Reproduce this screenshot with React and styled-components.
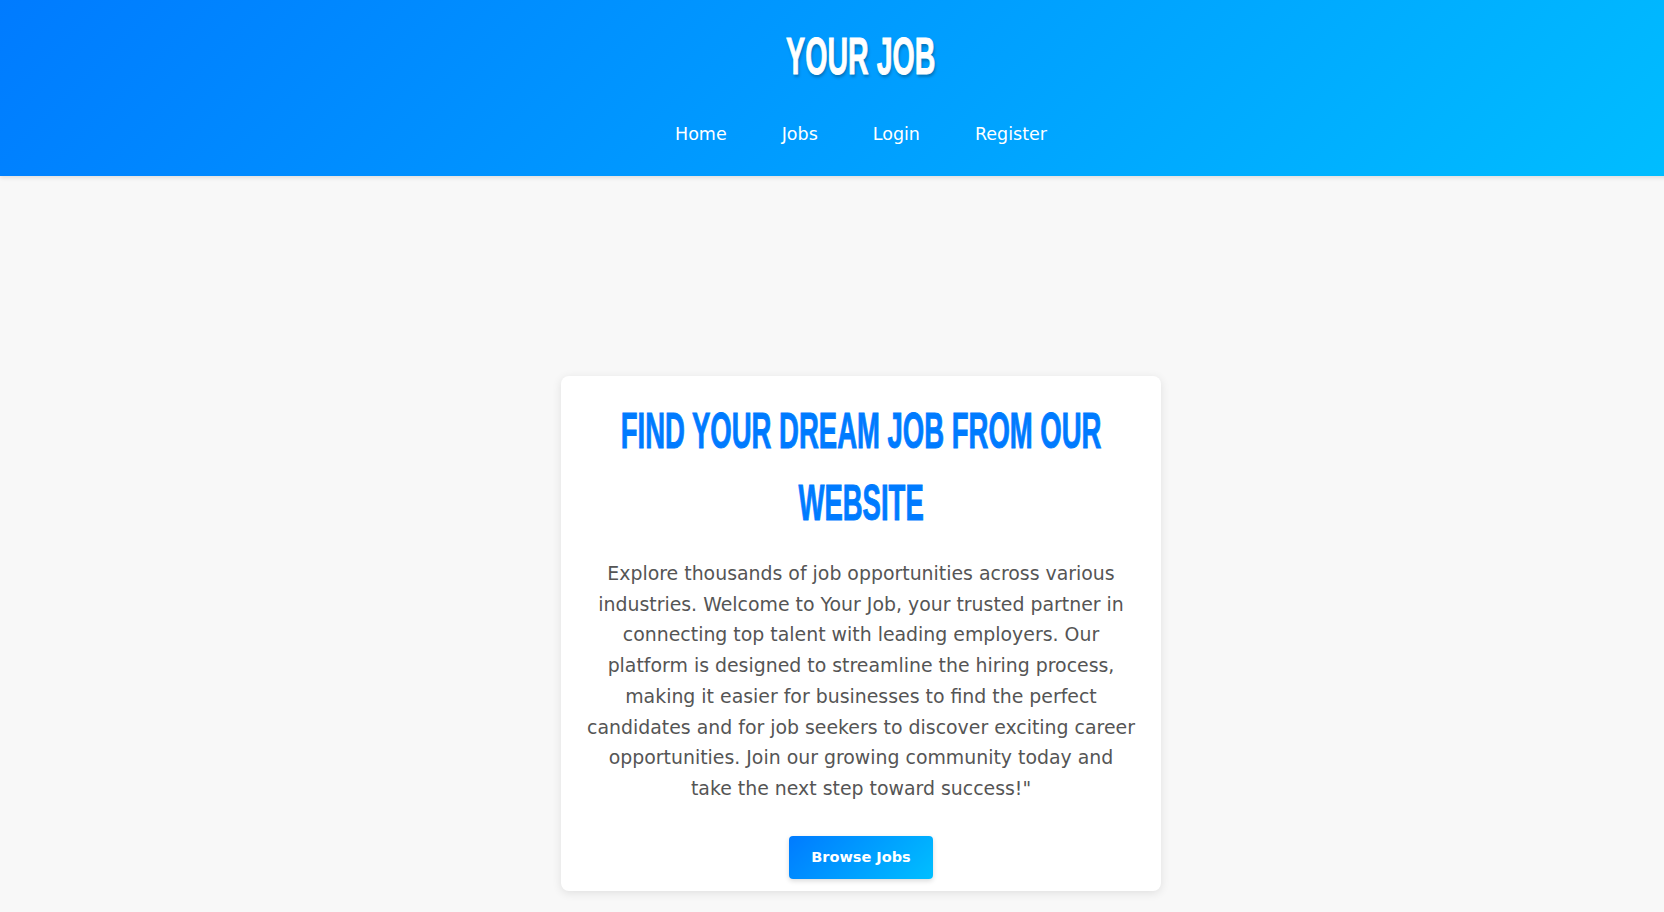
import styled, { createGlobalStyle } from "styled-components";

const GlobalStyle = createGlobalStyle`
  * {
    box-sizing: border-box;
  }
  body {
    margin: 0;
    background-color: #f8f8f8;
    font-family: "DejaVu Sans", "Liberation Sans", sans-serif;
    overflow-x: hidden;
  }
`;

// the display face is a squeezed bold grotesque
const SQUEEZE = 0.55;

function App() {
  return (
    <>
      <GlobalStyle />
      <Page>
        <Header>
          <Logo>Your Job</Logo>
          <Nav>
            {["Home", "Jobs", "Login", "Register"].map((item) => (
              <NavLink key={item} href="#">
                {item}
              </NavLink>
            ))}
          </Nav>
        </Header>

        <Main>
          <Card>
            <CardTitle>Find your dream job from our website</CardTitle>
            <CardText>
              Explore thousands of job opportunities across various industries.
              Welcome to Your Job, your trusted partner in connecting top talent
              with leading employers. Our platform is designed to streamline the
              hiring process, making it easier for businesses to find the
              perfect candidates and for job seekers to discover exciting career
              opportunities. Join our growing community today and take the next
              step toward success!"
            </CardText>
            <BrowseButton>Browse Jobs</BrowseButton>
          </Card>
        </Main>
      </Page>
    </>
  );
}

export default App;

const Page = styled.div`
  width: calc(100vw + 58px);
  min-height: 100vh;
`;

const Header = styled.header`
  height: 176px;
  padding-top: 24px;
  background: linear-gradient(135deg, #007bff, #00bfff);
  box-shadow: 0 2px 4px rgba(0, 0, 0, 0.1);
  display: flex;
  flex-direction: column;
  align-items: center;
`;

const Logo = styled.h1`
  margin: 0;
  font-family: "Liberation Sans", Arial, sans-serif;
  font-weight: 700;
  font-size: 52px;
  line-height: 64px;
  color: #fff;
  text-transform: uppercase;
  -webkit-text-stroke: 1px #fff;
  transform: scaleX(${SQUEEZE});
  text-shadow: 2px 3px 4px rgba(0, 0, 0, 0.25);
`;

const Nav = styled.nav`
  margin-top: 36px;
  display: flex;
  gap: 55px;
`;

const NavLink = styled.a`
  font-family: "DejaVu Sans", "Liberation Sans", sans-serif;
  font-size: 17.5px;
  color: #fff;
  text-decoration: none;
`;

const Main = styled.main`
  display: flex;
  justify-content: center;
  padding-top: 200px;
`;

const Card = styled.section`
  width: 600px;
  padding: 19px 25px 12px;
  background-color: #fff;
  border-radius: 8px;
  box-shadow: 0 2px 10px rgba(0, 0, 0, 0.1);
  display: flex;
  flex-direction: column;
  align-items: center;
  text-align: center;
`;

const CardTitle = styled.h2`
  margin: 0;
  width: calc(560px / ${SQUEEZE});
  flex-shrink: 0;
  font-family: "Liberation Sans", Arial, sans-serif;
  font-weight: 700;
  font-size: 50px;
  line-height: 72px;
  color: #007bff;
  text-transform: uppercase;
  -webkit-text-stroke: 1px #007bff;
  transform: scaleX(${SQUEEZE});
`;

const CardText = styled.p`
  margin: 19px 0 0;
  font-family: "DejaVu Sans", "Liberation Sans", sans-serif;
  font-size: 18.9px;
  line-height: 30.7px;
  color: #555;
`;

const BrowseButton = styled.button`
  margin-top: 32px;
  width: 144px;
  height: 43px;
  flex-shrink: 0;
  border: none;
  border-radius: 4px;
  background: linear-gradient(135deg, #007bff, #00bfff);
  box-shadow: 0 2px 5px rgba(0, 0, 0, 0.15);
  color: #fff;
  font-family: "DejaVu Sans", "Liberation Sans", sans-serif;
  font-weight: 700;
  font-size: 14.5px;
  cursor: pointer;
`;
